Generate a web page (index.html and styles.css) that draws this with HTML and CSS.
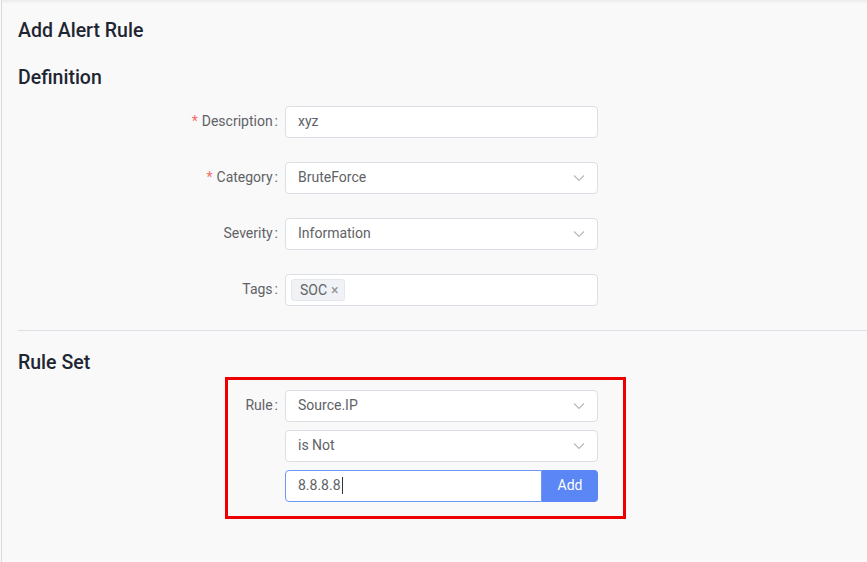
FILE: index.html
```html
<!DOCTYPE html>
<html>
<head>
<meta charset="utf-8">
<link rel="stylesheet" href="styles.css">
</head>
<body>
<div class="page">
  <h1 class="title">Add Alert Rule</h1>
  <h2 class="section-title">Definition</h2>
  <div class="form">
    <div class="row">
      <label class="label"><span class="req">*</span>Description<span class="colon">:</span></label>
      <div class="input"><span class="value">xyz</span></div>
    </div>
    <div class="row">
      <label class="label"><span class="req">*</span>Category<span class="colon">:</span></label>
      <div class="input select"><span class="value">BruteForce</span><svg class="chev" viewBox="0 0 12 8" width="12" height="8"><path d="M1 1.5 L6 6.5 L11 1.5" fill="none" stroke="#b4b8c0" stroke-width="1.1"/></svg></div>
    </div>
    <div class="row">
      <label class="label">Severity<span class="colon">:</span></label>
      <div class="input select"><span class="value">Information</span><svg class="chev" viewBox="0 0 12 8" width="12" height="8"><path d="M1 1.5 L6 6.5 L11 1.5" fill="none" stroke="#b4b8c0" stroke-width="1.1"/></svg></div>
    </div>
    <div class="row">
      <label class="label">Tags<span class="colon">:</span></label>
      <div class="input tags"><span class="tag">SOC<span class="x">×</span></span></div>
    </div>
  </div>
  <div class="divider"></div>
  <h2 class="section-title rs">Rule Set</h2>
  <div class="form rules">
    <div class="annotation"></div>
    <div class="row tight">
      <label class="label">Rule<span class="colon">:</span></label>
      <div class="input select"><span class="value">Source.IP</span><svg class="chev" viewBox="0 0 12 8" width="12" height="8"><path d="M1 1.5 L6 6.5 L11 1.5" fill="none" stroke="#b4b8c0" stroke-width="1.1"/></svg></div>
    </div>
    <div class="row tight">
      <span class="label"></span>
      <div class="input select"><span class="value">is Not</span><svg class="chev" viewBox="0 0 12 8" width="12" height="8"><path d="M1 1.5 L6 6.5 L11 1.5" fill="none" stroke="#b4b8c0" stroke-width="1.1"/></svg></div>
    </div>
    <div class="row tight">
      <span class="label"></span>
      <div class="group">
        <div class="input focus"><span class="value">8.8.8.8</span><span class="caret"></span></div>
        <button class="btn">Add</button>
      </div>
    </div>
  </div>
</div>
</body>
</html>
```
FILE: styles.css
```css
html, body {
  margin: 0;
  padding: 0;
  background: #f9f9f9;
}
body {
  font-family: Roboto, "Liberation Sans", sans-serif;
  color: #606266;
  height: 562px;
  overflow: hidden;
}
.page {
  margin-left: 1px;
  border-left: 1px solid #dcdcdc;
  padding: 18px 0 0 16px;
  height: 562px;
  box-sizing: border-box;
  background: linear-gradient(to bottom, #ececec 0, #f9f9f9 4px);
}
.title {
  margin: 0;
  font-size: 19.5px;
  font-weight: 500;
  line-height: 25px;
  color: #1f2633;
}
.section-title {
  margin: 22px 0 0 0;
  font-size: 19.5px;
  font-weight: 500;
  line-height: 25px;
  color: #1f2633;
}
.section-title.rs {
  margin-top: 19px;
}
.form {
  margin-top: 16px;
  display: flex;
  flex-direction: column;
  gap: 24px;
}
.form.rules {
  position: relative;
  margin-top: 15px;
  gap: 8px;
}
.row {
  display: flex;
  align-items: center;
  height: 32px;
}
.label {
  width: 267px;
  flex: none;
  box-sizing: border-box;
  padding-right: 7px;
  text-align: right;
  font-size: 14px;
  color: #606266;
  position: relative;
  top: -1px;
}
.req {
  color: #f56c6c;
  margin-right: 4px;
}
.colon {
  margin-left: 2px;
}
.input {
  width: 313px;
  height: 32px;
  box-sizing: border-box;
  border: 1px solid #dcdfe6;
  border-radius: 4px;
  background: #fff;
  display: flex;
  align-items: center;
  padding: 0 12px;
  font-size: 14px;
  color: #606266;
}
.value {
  position: relative;
  top: -1px;
}
.select {
  justify-content: space-between;
}
.tags {
  padding-left: 5px;
}
.tag {
  display: inline-flex;
  align-items: center;
  height: 22px;
  box-sizing: border-box;
  padding: 0 5px 0 8px;
  background: #f0f2f5;
  border: 1px solid #e4e7ed;
  border-radius: 3px;
  font-size: 14px;
  color: #606266;
}
.x {
  margin-left: 4px;
  color: #909399;
  font-size: 14px;
}
.divider {
  margin-top: 24px;
  height: 1px;
  background: #dcdfe6;
}
.group {
  display: flex;
  width: 313px;
  height: 32px;
}
.group .input {
  width: 257px;
  border-color: #6f97f7;
  border-radius: 4px 0 0 4px;
}
.caret {
  display: inline-block;
  width: 1px;
  height: 17px;
  background: #333;
  margin-left: 1px;
  position: relative;
  top: -1px;
}
.btn {
  width: 56px;
  height: 32px;
  border: none;
  border-radius: 0 4px 4px 0;
  background: #5a86f6;
  color: #fff;
  font-family: Roboto, "Liberation Sans", sans-serif;
  font-size: 14px;
  padding: 0 0 2px 0;
}
.annotation {
  position: absolute;
  left: 207px;
  top: -13px;
  width: 401px;
  height: 142px;
  box-sizing: border-box;
  border: 3px solid #ee0000;
  pointer-events: none;
}
```
